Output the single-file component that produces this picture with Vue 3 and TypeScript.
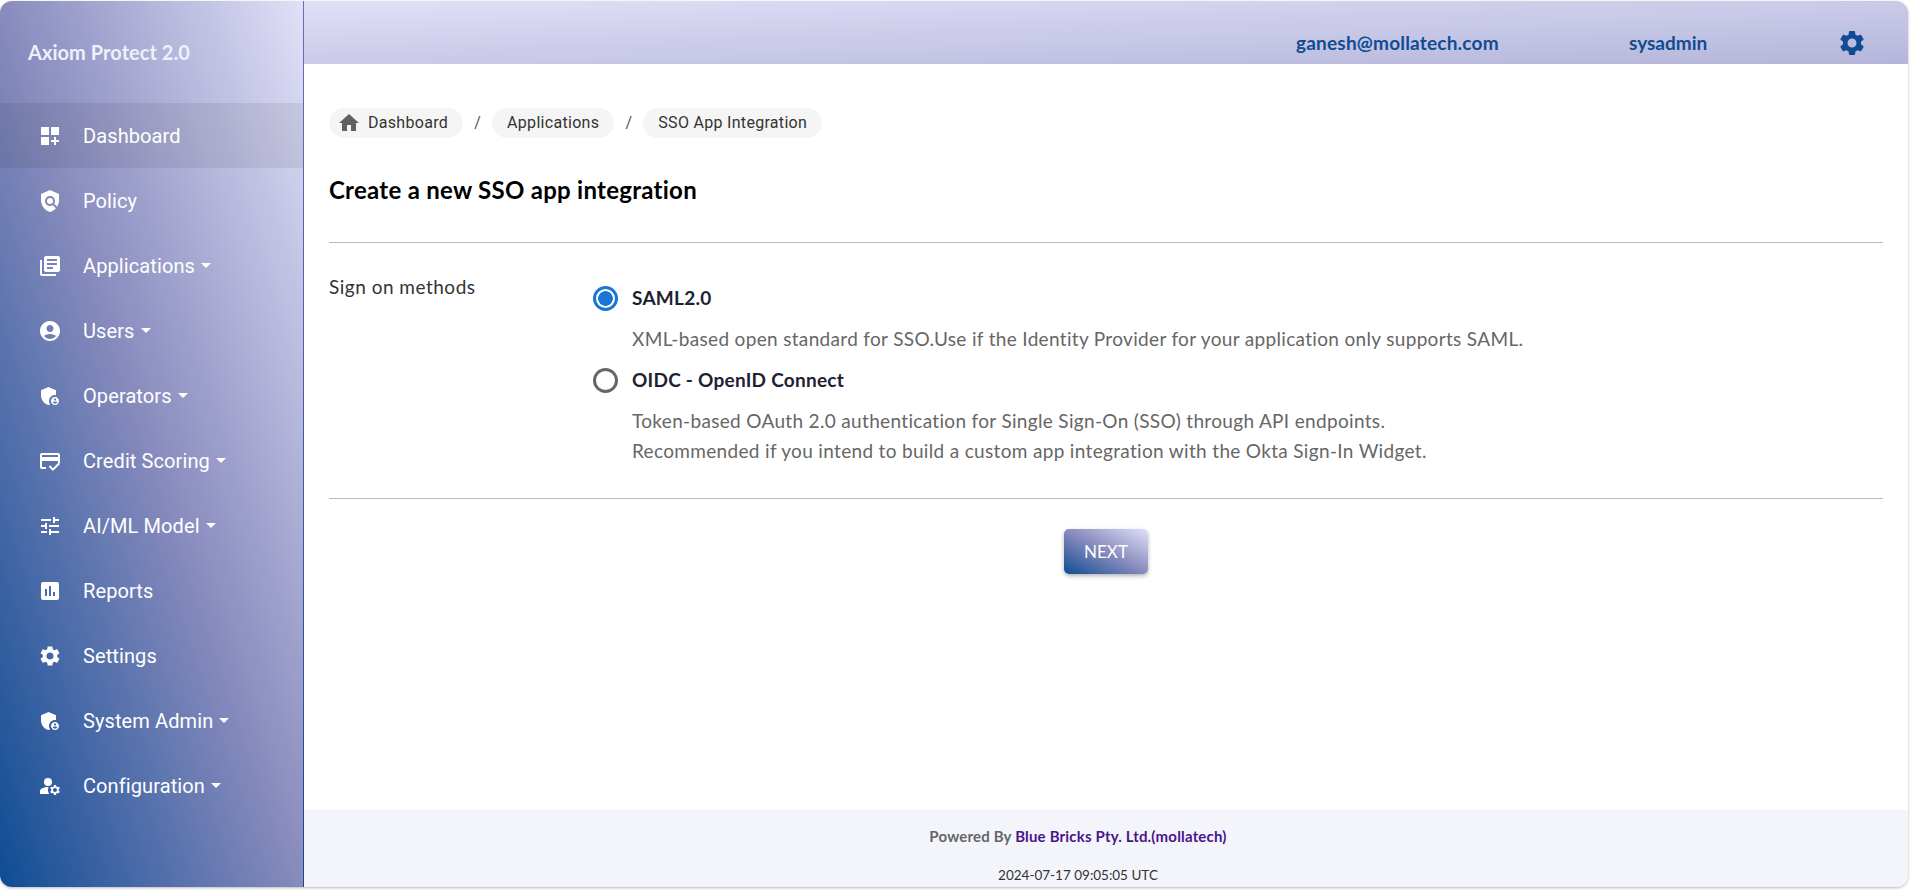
<script setup lang="ts">
interface NavItem { label: string; caret: boolean; paths: string[]; circle?: [number, number, number]; active?: boolean }
const adminPaths = [
  'M17 11c.34 0 .67.04 1 .09V6.27L10.5 3 3 6.27v4.91c0 4.54 3.2 8.79 7.5 9.82.55-.13 1.08-.32 1.6-.55-.69-.98-1.1-2.17-1.1-3.45 0-3.31 2.69-6 6-6z',
  'M17 13c-2.21 0-4 1.79-4 4s1.79 4 4 4 4-1.79 4-4-1.79-4-4-4zm0 1.38c.62 0 1.12.51 1.12 1.12s-.51 1.12-1.12 1.12-1.12-.51-1.12-1.12.5-1.12 1.12-1.12zm0 5.37c-.93 0-1.74-.46-2.24-1.17.05-.72 1.51-1.08 2.24-1.08s2.19.36 2.24 1.08c-.5.71-1.31 1.17-2.24 1.17z'
]
const gear = 'M19.14 12.94c.04-.3.06-.61.06-.94 0-.32-.02-.64-.07-.94l2.03-1.58c.18-.14.23-.41.12-.61l-1.92-3.32c-.12-.22-.37-.29-.59-.22l-2.39.96c-.5-.38-1.03-.7-1.62-.94l-.36-2.54c-.04-.24-.24-.41-.48-.41h-3.84c-.24 0-.43.17-.47.41l-.36 2.54c-.59.24-1.13.57-1.62.94l-2.39-.96c-.22-.08-.47 0-.59.22L2.74 8.87c-.12.21-.08.47.12.61l2.03 1.58c-.05.3-.09.63-.09.94s.02.64.07.94l-2.03 1.58c-.18.14-.23.41-.12.61l1.92 3.32c.12.22.37.29.59.22l2.39-.96c.5.38 1.03.7 1.62.94l.36 2.54c.05.24.24.41.48.41h3.84c.24 0 .44-.17.47-.41l.36-2.54c.59-.24 1.13-.56 1.62-.94l2.39.96c.22.08.47 0 .59-.22l1.92-3.32c.12-.22.07-.47-.12-.61l-2.01-1.58zM12 15.6c-1.98 0-3.6-1.62-3.6-3.6s1.62-3.6 3.6-3.6 3.6 1.62 3.6 3.6-1.62 3.6-3.6 3.6z'
const nav: NavItem[] = [
  { label: 'Dashboard', caret: false, active: true, paths: ['M3 3h8v8H3zm10 0h8v8h-8zM3 13h8v8H3zm15 0h-2v3h-3v2h3v3h2v-3h3v-2h-3z'] },
  { label: 'Policy', caret: false, circle: [12, 12, 3], paths: ['M21 5l-9-4-9 4v6c0 5.55 3.84 10.74 9 12 2.3-.56 4.33-1.9 5.88-3.71l-3.12-3.12c-1.94 1.29-4.58 1.07-6.29-.64-1.95-1.95-1.95-5.12 0-7.07 1.95-1.95 5.12-1.95 7.07 0 1.71 1.71 1.92 4.35.64 6.29l2.9 2.9C20.29 15.69 21 13.38 21 11V5z'] },
  { label: 'Applications', caret: true, paths: ['M4 6H2v14c0 1.1.9 2 2 2h14v-2H4V6zm16-4H8c-1.1 0-2 .9-2 2v12c0 1.1.9 2 2 2h12c1.1 0 2-.9 2-2V4c0-1.1-.9-2-2-2zm-1 9H9V9h10v2zm-4 4H9v-2h6v2zm4-8H9V5h10v2z'] },
  { label: 'Users', caret: true, paths: ['M12 2C6.48 2 2 6.48 2 12s4.48 10 10 10 10-4.48 10-10S17.52 2 12 2zm0 4c1.93 0 3.5 1.57 3.5 3.5S13.93 13 12 13s-3.5-1.57-3.5-3.5S10.07 6 12 6zm0 14c-2.03 0-4.43-.82-6.14-2.88C7.55 15.8 9.68 15 12 15s4.45.8 6.14 2.12C16.43 19.18 14.03 20 12 20z'] },
  { label: 'Operators', caret: true, paths: adminPaths },
  { label: 'Credit Scoring', caret: true, paths: ['M20 4H4c-1.11 0-2 .89-2 2v12c0 1.11.89 2 2 2h4v-2H4v-6h16v2h2V6c0-1.11-.9-2-2-2zm0 4H4V6h16v2zm-5.07 11.17l-2.83-2.83-1.41 1.41L14.93 22 22 14.93l-1.41-1.41-5.66 5.65z'] },
  { label: 'AI/ML Model', caret: true, paths: ['M3 17v2h6v-2H3zM3 5v2h10V5H3zm10 16v-2h8v-2h-8v-2h-2v6h2zM7 9v2H3v2h4v2h2V9H7zm14 4v-2H11v2h10zm-6-4h2V7h4V5h-4V3h-2v6z'] },
  { label: 'Reports', caret: false, paths: ['M19 3H5c-1.1 0-2 .9-2 2v14c0 1.1.9 2 2 2h14c1.1 0 2-.9 2-2V5c0-1.1-.9-2-2-2zM9 17H7v-7h2v7zm4 0h-2V7h2v10zm4 0h-2v-4h2v4z'] },
  { label: 'Settings', caret: false, paths: [gear] },
  { label: 'System Admin', caret: true, paths: adminPaths },
  { label: 'Configuration', caret: true, circle: [10, 8, 4], paths: ['M10.67 13.02c-.22-.01-.44-.02-.67-.02-2.42 0-4.68.67-6.61 1.82-.88.52-1.39 1.5-1.39 2.53V20h9.26c-.79-1.13-1.26-2.51-1.26-4 0-1.07.25-2.07.67-2.98z', 'M20.75 16c0-.22-.03-.42-.06-.63l1.14-1.01-1-1.73-1.45.49c-.32-.27-.68-.48-1.08-.63L18 11h-2l-.3 1.49c-.4.15-.76.36-1.08.63l-1.45-.49-1 1.73 1.14 1.01c-.03.21-.06.41-.06.63s.03.42.06.63l-1.14 1.01 1 1.73 1.45-.49c.32.27.68.48 1.08.63L16 21h2l.3-1.49c.4-.15.76-.36 1.08-.63l1.45.49 1-1.73-1.14-1.01c.03-.21.06-.41.06-.63zM17 18c-1.1 0-2-.9-2-2s.9-2 2-2 2 .9 2 2-.9 2-2 2z'] }
]
</script>

<template>
  <div class="page">
    <div class="card">
      <aside class="sidebar">
        <div class="brand">Axiom Protect 2.0</div>
        <nav class="nav">
          <div v-for="item in nav" :key="item.label" class="nav-item" :class="{ active: item.active }">
            <svg class="nav-icon" viewBox="0 0 24 24" fill="currentColor">
              <circle v-if="item.circle" :cx="item.circle[0]" :cy="item.circle[1]" :r="item.circle[2]" />
              <path v-for="p in item.paths" :key="p" :d="p" />
            </svg>
            <span class="nav-label">{{ item.label }}</span>
            <span v-if="item.caret" class="caret"></span>
          </div>
        </nav>
      </aside>
      <div class="main">
        <header class="topbar">
          <span class="email">ganesh@mollatech.com</span>
          <span class="role">sysadmin</span>
          <svg class="top-gear" viewBox="0 0 24 24" fill="currentColor"><path :d="gear" /></svg>
        </header>
        <main class="content">
          <div class="crumbs">
            <span class="chip">
              <svg class="home" viewBox="0 0 24 24" fill="currentColor"><path d="M10 20v-6h4v6h5v-8h3L12 3 2 12h3v8z" /></svg>
              Dashboard
            </span>
            <span class="sep">/</span>
            <span class="chip">Applications</span>
            <span class="sep">/</span>
            <span class="chip">SSO App Integration</span>
          </div>
          <h1 class="title">Create a new SSO app integration</h1>
          <div class="section">
            <div class="section-label">Sign on methods</div>
            <div class="options">
              <div class="option">
                <span class="radio checked"></span>
                <span class="opt-name">SAML2.0</span>
              </div>
              <p class="desc first">XML-based open standard for SSO.Use if the Identity Provider for your application only supports SAML.</p>
              <div class="option">
                <span class="radio"></span>
                <span class="opt-name">OIDC - OpenID Connect</span>
              </div>
              <p class="desc">Token-based OAuth 2.0 authentication for Single Sign-On (SSO) through API endpoints.<br />Recommended if you intend to build a custom app integration with the Okta Sign-In Widget.</p>
            </div>
          </div>
          <div class="actions"><button class="next" type="button">NEXT</button></div>
        </main>
        <footer class="footer">
          <div class="powered">Powered By <span class="company">Blue Bricks Pty. Ltd.(mollatech)</span></div>
          <div class="stamp">2024-07-17 09:05:05 UTC</div>
        </footer>
      </div>
    </div>
  </div>
</template>

<style>
html, body { margin: 0; background: #fff; }
</style>

<style scoped>
.page {
  width: 1912px;
  height: 890px;
  box-sizing: border-box;
  padding: 1px 4px 3px 0;
  overflow: hidden;
}
.card {
  display: flex;
  height: 100%;
  border-radius: 12px;
  overflow: hidden;
  box-shadow: 0 1px 3px rgba(0, 0, 0, 0.28);
  background: #fff;
}
.sidebar {
  flex: 0 0 304px;
  box-sizing: border-box;
  border-right: 1px solid #2a4a8e;
  border-image: linear-gradient(to bottom, #6a70ac, #1f4590) 1;
  background: linear-gradient(to top right, #0f4c94, #888bbd 50%, #e0e0f8);
  color: #fff;
}
.brand {
  height: 102px;
  box-sizing: border-box;
  padding: 39px 0 0 28px;
  font: 700 20px/24px Lato, sans-serif;
  letter-spacing: 0.05px;
  color: #eef0fb;
}
.nav-item {
  display: flex;
  align-items: center;
  height: 65px;
  padding-left: 38px;
}
.nav-item.active { background: rgba(0, 0, 0, 0.07); }
.nav-icon { width: 24px; height: 24px; flex: none; margin-right: 21px; }
.nav-label { font: 400 20px/24px Roboto, sans-serif; letter-spacing: 0.1px; }
.caret {
  width: 0;
  height: 0;
  margin-left: 6px;
  border-left: 5px solid transparent;
  border-right: 5px solid transparent;
  border-top: 5px solid #fff;
}
.main { flex: 1; display: flex; flex-direction: column; min-width: 0; }
.topbar {
  flex: 0 0 63px;
  box-sizing: border-box;
  display: flex;
  align-items: center;
  background: linear-gradient(to bottom right, #e0e0f8, #b5b5da);
  color: #0f4c94;
  font: 700 19px/24px Lato, sans-serif;
  padding: 21px 0 0 992px;
}
.email { width: 333px; letter-spacing: 0.2px; }
.role { width: 208px; }
.top-gear { width: 30px; height: 30px; }
.content { flex: 1; padding: 44px 25px 0 25px; }
.crumbs { display: flex; align-items: center; height: 30px; }
.chip {
  display: flex;
  align-items: center;
  height: 30px;
  padding: 0 15px;
  border-radius: 15px;
  background: #f5f5f5;
  color: #333;
  font: 400 16px/20px Roboto, sans-serif;
  letter-spacing: 0.3px;
}
.home { width: 24px; height: 24px; margin: 0 7px 0 -7px; color: #616161; }
.sep { width: 29px; text-align: center; color: #555; font: 400 16px/20px Roboto, sans-serif; }
.title { margin: 0; padding: 37px 0 37px; font: 700 24px/30px Lato, sans-serif; letter-spacing: 0.27px; color: #000; border-bottom: 1px solid #bbb; }
.section { display: flex; border-bottom: 1px solid #bbb; height: 256px; box-sizing: border-box; }
.section-label { width: 264px; padding-top: 32px; font: 400 19px/24px Lato, sans-serif; letter-spacing: 0.5px; color: #333; }
.options { padding-top: 43px; }
.option { display: flex; align-items: center; height: 24px; }
.radio {
  width: 25px;
  height: 25px;
  box-sizing: border-box;
  border: 3px solid #666;
  border-radius: 50%;
  margin-right: 14px;
}
.radio.checked { border-color: #1976d2; background: radial-gradient(circle, #1976d2 0 7px, transparent 7.6px); }
.opt-name { font: 700 19px/24px Lato, sans-serif; letter-spacing: 0.25px; color: #1c2233; }
.desc { margin: 14px 0 16px 39px; font: 400 19px/30px Lato, sans-serif; letter-spacing: 0.33px; color: #666; }
.desc.first { margin-bottom: 14px; }
.actions { display: flex; justify-content: center; padding-top: 30px; }
.next {
  width: 84px;
  height: 45px;
  border: 0;
  border-radius: 5px;
  background: linear-gradient(to top right, #0f4c94, #888bbd 50%, #e0e0f8);
  color: #fff;
  font: 400 17px/20px Lato, sans-serif;
  box-shadow: 0 2px 4px rgba(0, 0, 0, 0.3);
}
.footer {
  flex: 0 0 77px;
  background: #f4f5fa;
  padding-right: 56px;
  text-align: center;
}
.powered { padding-top: 16px; font: 700 15px/20px Lato, sans-serif; color: #666; letter-spacing: 0.18px; }
.company { color: #4a148c; }
.stamp { padding-top: 20px; font: 400 13.5px/18px Lato, sans-serif; color: #333; }
</style>
